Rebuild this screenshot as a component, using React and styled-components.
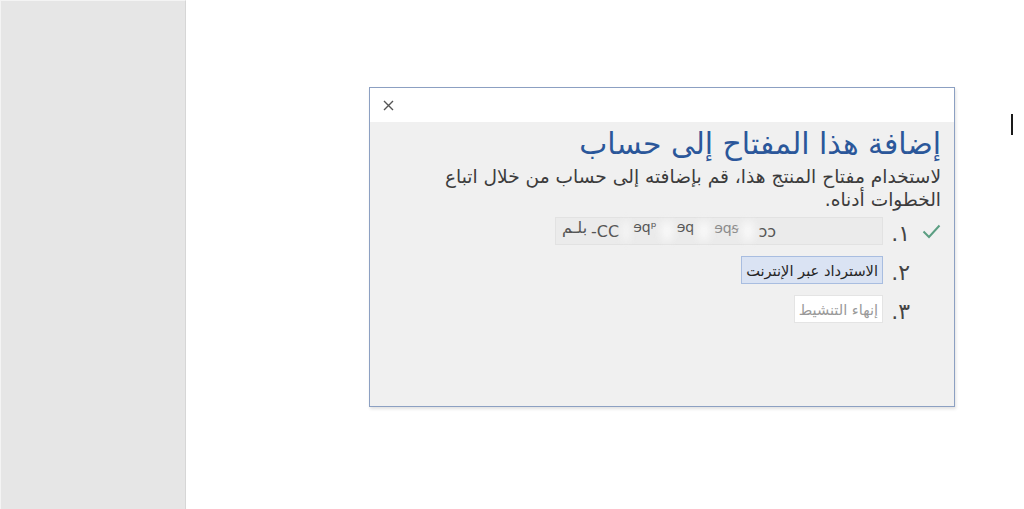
import React from "react";
import styled, { createGlobalStyle } from "styled-components";

const GlobalStyle = createGlobalStyle`
  html, body {
    margin: 0;
    padding: 0;
    background: #ffffff;
    font-family: "DejaVu Sans", "Noto Sans", sans-serif;
  }
`;

const Page = styled.div`
  display: flex;
  width: 1024px;
  height: 509px;
  overflow: hidden;
`;

const Sidebar = styled.div`
  width: 184px;
  flex-shrink: 0;
  background: #e6e6e6;
  border-top: 1px solid #f4f4f4;
  border-left: 1px solid #f4f4f4;
  border-right: 1px solid #d6d6d6;
`;

const Main = styled.div`
  position: relative;
  flex: 1;
  padding: 87px 0 0 183px;
`;

const Caret = styled.div`
  position: absolute;
  left: 825px;
  top: 114px;
  width: 2px;
  height: 21px;
  background: #1a1a1a;
`;

const Dialog = styled.div`
  width: 584px;
  height: 318px;
  display: flex;
  flex-direction: column;
  border: 1px solid #8ca0c2;
  box-shadow: 1px 2px 3px rgba(0, 0, 0, 0.12);
  background: #f0f0f0;
`;

const Header = styled.div`
  height: 34px;
  flex-shrink: 0;
  background: #ffffff;
  display: flex;
  align-items: center;
  padding-left: 11px;
`;

const CloseButton = styled.button`
  border: none;
  background: transparent;
  padding: 0;
  width: 14px;
  height: 14px;
  display: flex;
  align-items: center;
  justify-content: center;
  cursor: pointer;
`;

const Body = styled.div`
  direction: rtl;
  padding: 3px 13px 0 14px;
  display: flex;
  flex-direction: column;
`;

const Title = styled.h1`
  margin: 0;
  font-size: 29.8px;
  line-height: 38px;
  font-weight: normal;
  color: #2b579a;
`;

const Description = styled.p`
  margin: 3px 0 0;
  font-size: 18.6px;
  line-height: 22.5px;
  color: #3c3c3c;
  width: 515px;
`;

const Steps = styled.ol`
  list-style: none;
  margin: 6px 0 0;
  padding: 0;
  display: flex;
  flex-direction: column;
  gap: 11px;
`;

const Step = styled.li`
  display: flex;
  align-items: center;
  height: 28px;
`;

const CheckCell = styled.span`
  width: 19px;
  display: flex;
  justify-content: flex-end;
  align-items: center;
  padding-left: 8px;
`;

const Number = styled.span`
  width: 21px;
  padding: 5px 4px 0 6px;
  font-family: "DejaVu Sans", sans-serif;
  font-size: 22px;
  color: #444444;
  line-height: 28px;
`;

const KeyBox = styled.div`
  direction: ltr;
  width: 320px;
  height: 26px;
  background: #ebebeb;
  border: 1px solid #e2e2e2;
  display: flex;
  align-items: center;
  padding-left: 6px;
  font-size: 16px;
  color: #555555;
  gap: 4px;
`;

const KeyPart = styled.span`
  margin-top: ${(p) => (p.up ? "-8px" : "0")};
  font-size: ${(p) => (p.small ? "14px" : "16px")};
  color: ${(p) => (p.light ? "#8a8a8a" : "#555555")};
`;

const Smudge = styled.span`
  display: inline-block;
  width: ${(p) => p.w || 28}px;
  height: 20px;
  border-radius: 10px;
  background: rgba(250, 250, 250, 0.95);
  filter: blur(4px);
`;

const ActionButton = styled.button`
  font-family: inherit;
  direction: rtl;
  height: 28px;
  padding: 0 4px;
  font-size: 14.6px;
  background: ${(p) => (p.primary ? "#dae3f3" : "#ffffff")};
  border: 1px solid ${(p) => (p.primary ? "#a8bde0" : "#e4e4e4")};
  color: ${(p) => (p.primary ? "#262626" : "#9a9a9a")};
  cursor: pointer;
`;

const Check = () => (
  <svg width="19" height="15" viewBox="0 0 19 15">
    <path d="M1.5 7.5 L7 13 L17.5 1.5" fill="none" stroke="#5b9e82" strokeWidth="2" />
  </svg>
);

const Cross = () => (
  <svg width="11" height="11" viewBox="0 0 11 11">
    <path d="M1 1 L10 10 M10 1 L1 10" stroke="#555555" strokeWidth="1.4" />
  </svg>
);

export default function App() {
  return (
    <>
      <GlobalStyle />
      <Page>
        <Sidebar />
        <Main>
          <Dialog>
            <Header>
              <CloseButton aria-label="close">
                <Cross />
              </CloseButton>
            </Header>
            <Body>
              <Title>إضافة هذا المفتاح إلى حساب</Title>
              <Description>
                لاستخدام مفتاح المنتج هذا، قم بإضافته إلى حساب من خلال اتباع
                الخطوات أدناه.
              </Description>
              <Steps>
                <Step>
                  <CheckCell>
                    <Check />
                  </CheckCell>
                  <Number>١.</Number>
                  <KeyBox>
                    <KeyPart up>بلـم</KeyPart>
                    <KeyPart>-CC</KeyPart>
                    <Smudge w={6} />
                    <KeyPart up small>ɘqᵖ</KeyPart>
                    <Smudge w={12} />
                    <KeyPart up small>ɘq</KeyPart>
                    <Smudge w={12} />
                    <KeyPart up small light>ɘqᵴ</KeyPart>
                    <Smudge w={12} />
                    <KeyPart>ɔɔ</KeyPart>
                  </KeyBox>
                </Step>
                <Step>
                  <CheckCell />
                  <Number>۲.</Number>
                  <ActionButton primary>الاسترداد عبر الإنترنت</ActionButton>
                </Step>
                <Step>
                  <CheckCell />
                  <Number>۳.</Number>
                  <ActionButton>إنهاء التنشيط</ActionButton>
                </Step>
              </Steps>
            </Body>
          </Dialog>
          <Caret />
        </Main>
      </Page>
    </>
  );
}
